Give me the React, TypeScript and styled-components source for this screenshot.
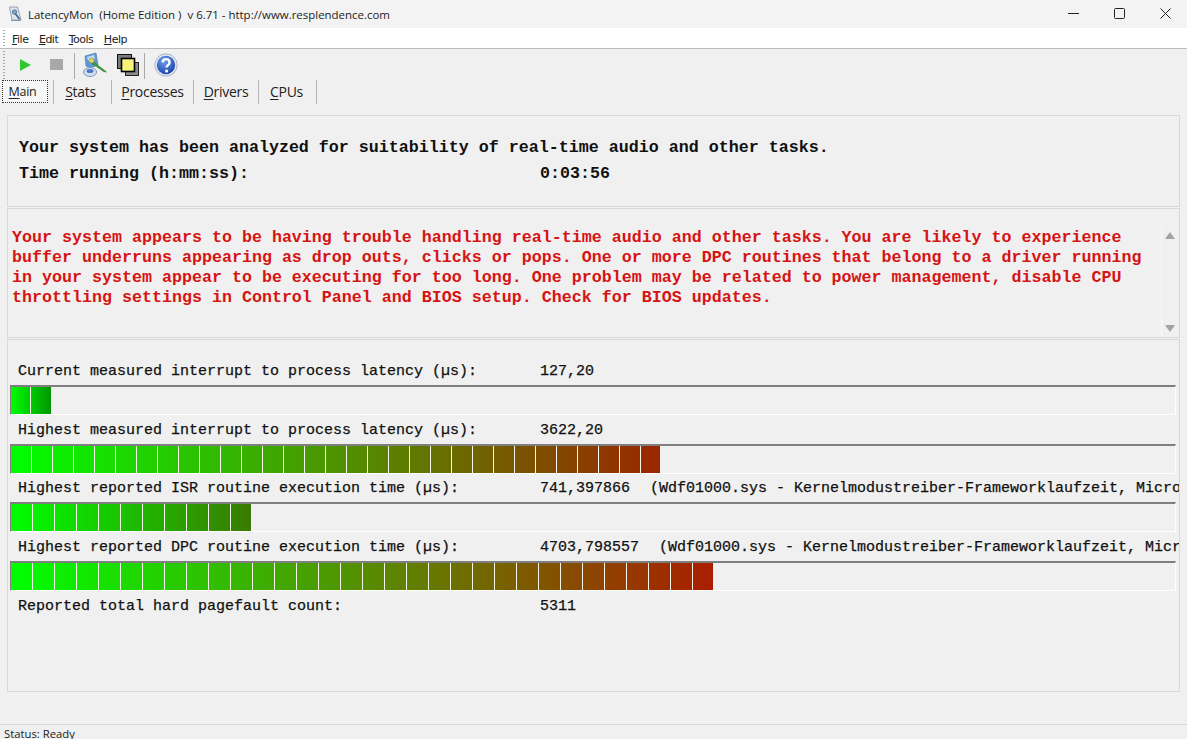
import React from "react";
import styled, { createGlobalStyle } from "styled-components";

const Global = createGlobalStyle`
  html, body { margin: 0; padding: 0; background: #f0f0f0; }
  #root { width: 1187px; height: 739px; overflow: hidden; }
`;

const Win = styled.div`
  width: 1187px; height: 739px; display: flex; flex-direction: column;
  background: #f0f0f0; overflow: hidden; font-family: "Open Sans", sans-serif; color: #111;
`;
const TitleBar = styled.div`
  height: 28px; flex: none; display: flex; align-items: center; background: #f3f3f3;
  padding-left: 8px; font-size: 11.46px; color: #222;
`;
const TitleText = styled.span`
  margin-left: 5px; white-space: pre;
`;
const WinButtons = styled.div`
  margin-left: auto; margin-right: -1px; padding-bottom: 2px; box-sizing: border-box;
  display: flex; align-items: center; height: 100%;
`;
const WinBtn = styled.div`
  width: 46px; height: 100%; display: flex; align-items: center; justify-content: center;
`;
const MenuBar = styled.div`
  height: 18px; padding-top: 2px; flex: none; background: #fff; display: flex; align-items: center;
  border-bottom: 1px solid #bcbcbc; padding-left: 12px; gap: 10.5px;
  font-family: "DejaVu Sans", sans-serif; font-size: 11px; color: #222; position: relative;
`;
const Gripper = styled.div`
  position: absolute; left: 3px; top: 2px; bottom: 1px; width: 2px;
  background: repeating-linear-gradient(to bottom, #a8a8a8 0 1px, transparent 1px 3px);
`;
const MenuItem = styled.span`
  white-space: pre; letter-spacing: -0.5px;
  u { text-underline-offset: 1px; }
`;
const ToolBar = styled.div`
  height: 31px; flex: none; display: flex; align-items: center; position: relative; padding-left: 17px;
`;
const ToolSlot = styled.div<{ $w: number; $pl?: number; $pr?: number }>`
  width: ${(p) => p.$w}px; height: 100%; box-sizing: border-box;
  padding-left: ${(p) => p.$pl ?? 0}px; padding-right: ${(p) => p.$pr ?? 0}px;
  display: flex; align-items: center; justify-content: center; flex: none;
`;
const ToolSep = styled.div`
  width: 1px; height: 26px; background: #a9a9a9; flex: none; margin-top: 2px;
`;
const Tabs = styled.div`
  height: 24px; flex: none; display: flex; align-items: stretch; padding-left: 2px;
  font-size: 14px; color: #222;
`;
const Tab = styled.div<{ $w: number; $pr?: number }>`
  width: ${(p) => p.$w}px; box-sizing: border-box; display: flex; align-items: center; justify-content: center;
  border-right: 1px solid #b4b4b4; padding-bottom: 1px; padding-right: ${(p) => p.$pr ?? 0}px;
  letter-spacing: -0.3px;
  u { text-underline-offset: 2px; text-decoration-thickness: 1px; }
`;
const ActiveTab = styled(Tab)`
  border: 1px dotted #333; background: #f7f7f7; height: 23px; margin-top: 0; font-size: 12.5px;
  padding-bottom: 0; letter-spacing: -0.3px;
`;
const TabGap = styled.div`
  width: 6px; flex: none; border-right: 1px solid #b4b4b4; box-sizing: border-box;
`;
const Body = styled.div`
  flex: none; display: flex; flex-direction: column; padding: 11px 7px 0 7px; gap: 1px;
`;
const Panel = styled.div<{ $h: number }>`
  height: ${(p) => p.$h}px; box-sizing: border-box; border: 1px solid #d9d9d9; position: relative;
  overflow: hidden;
`;
const Mono = styled.div`
  font-family: "Liberation Mono", monospace; white-space: pre;
`;
const HeadPanel = styled(Panel)`
  padding: 22px 0 0 11px; display: flex; flex-direction: column; gap: 7px;
`;
const HeadLine = styled(Mono)`
  font-size: 16.67px; font-weight: bold; line-height: 19px; color: #111;
`;
const HeadRow = styled.div`
  display: flex;
`;
const HeadLabel = styled(HeadLine)`
  width: 521px;
`;
const WarnPanel = styled(Panel)`
  padding: 19px 0 0 4px;
`;
const WarnText = styled(Mono)`
  font-size: 16.67px; font-weight: bold; line-height: 20px; color: #d61414;
`;
const ScrollTrack = styled.div`
  position: absolute; right: 1px; top: 17px; bottom: 1px; width: 17px;
  border-left: 1px solid #f8f8f8; box-sizing: border-box;
  display: flex; flex-direction: column; justify-content: space-between; align-items: center;
  padding: 6px 0 4px;
`;
const Arrow = styled.div<{ $down?: boolean }>`
  width: 0; height: 0; border-left: 5px solid transparent; border-right: 5px solid transparent;
  ${(p) => (p.$down ? "border-top: 7px solid #a3a3a3;" : "border-bottom: 7px solid #a3a3a3;")}
`;
const MetricsPanel = styled(Panel)`
  padding: 23px 0 0 2px; display: flex; flex-direction: column;
`;
const MetricLine = styled(Mono)`
  font-size: 15px; line-height: 18px; height: 18px; padding-left: 8px; color: #111; display: flex;
  -webkit-text-stroke: 0.25px #111;
`;
const MetricLabel = styled.span`
  width: 522px; flex: none;
`;
const Detail = styled.span`
  margin-left: 20px;
`;
const Track = styled.div<{ $after: number }>`
  width: 1166px; height: 30px; box-sizing: border-box; margin: 4px 0 ${(p) => p.$after}px; flex: none;
  border-top: 2px solid #7f7f7f; border-left: 1px solid #7f7f7f; border-bottom: 1px solid #fff;
  border-right: 1px solid #fff; display: flex; overflow: hidden;
`;
const Seg = styled.div<{ $w: number }>`
  width: ${(p) => p.$w}px; height: 100%; flex: none; box-sizing: border-box; border-right: 1px solid #f6f6ea;
  &:last-child { border-right: none; }
`;
const SpacerBottom = styled.div`
  flex: 1;
`;
const StatusGap = styled.div`
  height: 32px; flex: none;
`;
const StatusBar = styled.div`
  border-top: 1px solid #d9d9d9; height: 15px; flex: none; padding: 0 0 0 4px;
  font-size: 11.3px; line-height: 17px; color: #222;
`;

const lerp = (a: number, b: number, t: number) => Math.round(a + (b - a) * t);
type RGB = [number, number];

function Bar({ width, seg, end, after = 7 }: { width: number; seg: number; end: RGB; after?: number }) {
  const count = Math.ceil(width / seg);
  const colorAt = (x: number) => {
    const t = x / width;
    return `rgb(${lerp(0, end[0], t)},${lerp(255, end[1], t)},0)`;
  };
  return (
    <Track $after={after}>
      {Array.from({ length: count }, (_, i) => {
        const start = i * seg;
        const w = Math.min(seg, width - start);
        const bg = `linear-gradient(to right, ${colorAt(start)}, ${colorAt(start + w)})`;
        return <Seg key={i} $w={w} style={{ background: bg }} />;
      })}
    </Track>
  );
}

const AppIcon = () => (
  <svg width="15" height="16" viewBox="0 0 15 16">
    <path d="M1.5 1h8l3.5 13h-9z" fill="#dfe6ee" stroke="#7d8da5" strokeWidth=".8" />
    <circle cx="6.5" cy="6" r="2.2" fill="#7fa8cc" stroke="#3e5f8a" strokeWidth=".7" />
    <path d="M7.5 8l4 5" stroke="#38577f" strokeWidth="1.5" />
    <path d="M3 14h10v1H3z" fill="#8a97aa" />
  </svg>
);
const Play = () => (
  <svg width="14" height="14" viewBox="0 0 14 14">
    <path d="M2 1L13 7 2 13z" fill="#2fc72f" />
  </svg>
);
const Stop = () => (
  <svg width="13" height="11" viewBox="0 0 13 11"><rect width="13" height="11" fill="#a8a8a8" /></svg>
);
const Tool1 = () => (
  <svg width="26" height="26" viewBox="0 0 26 26">
    <path d="M3 4l11-3 2 12-8 3-4-2z" fill="#5a9ad6" stroke="#5d7ea6" strokeWidth=".7" />
    <path d="M5 5l7-2 1 4-7 2z" fill="#bfe3f7" />
    <ellipse cx="8" cy="20" rx="6.5" ry="4.5" fill="#d4dff0" stroke="#7f93bd" />
    <ellipse cx="8" cy="19" rx="3.5" ry="2" fill="#4e77c8" />
    <path d="M9 8l13 10 2.5 2-3-.5L8 10z" fill="#3da63d" stroke="#2a6e2a" strokeWidth=".6" />
    <circle cx="9.5" cy="8.5" r="2.6" fill="#e6d36a" stroke="#8d7f30" strokeWidth=".6" />
  </svg>
);
const Tool2 = () => (
  <svg width="24" height="24" viewBox="0 0 24 24">
    <rect x="1.5" y="1.5" width="14" height="14" fill="#7a7a7a" stroke="#111" />
    <rect x="9.5" y="9.5" width="13" height="13" fill="#8a8a8a" stroke="#222" />
    <rect x="5.5" y="5.5" width="13" height="13" fill="#f6f27a" stroke="#000" strokeWidth="1.6" />
  </svg>
);
const Help = () => (
  <svg width="24" height="24" viewBox="0 0 24 24">
    <defs>
      <radialGradient id="hb" cx="40%" cy="30%" r="75%">
        <stop offset="0" stopColor="#6f9ff0" />
        <stop offset="1" stopColor="#1840a8" />
      </radialGradient>
    </defs>
    <circle cx="12" cy="12" r="11.2" fill="#e3e8f2" stroke="#9aa5bd" strokeWidth=".8" />
    <circle cx="12" cy="12" r="9.2" fill="url(#hb)" />
    <path d="M8.6 9.4c.2-4.4 7-4.4 7 .1 0 2.7-3 2.6-3 5" fill="none" stroke="#fff" strokeWidth="2.4" />
    <circle cx="12.6" cy="18" r="1.6" fill="#fff" />
  </svg>
);

const warning = `Your system appears to be having trouble handling real-time audio and other tasks. You are likely to experience
buffer underruns appearing as drop outs, clicks or pops. One or more DPC routines that belong to a driver running
in your system appear to be executing for too long. One problem may be related to power management, disable CPU
throttling settings in Control Panel and BIOS setup. Check for BIOS updates.`;

export default function App() {
  return (
    <Win>
      <Global />
      <TitleBar>
        <AppIcon />
        <TitleText>LatencyMon  (Home Edition )  v 6.71 - http://www.resplendence.com</TitleText>
        <WinButtons>
          <WinBtn>
            <svg width="11" height="11" viewBox="0 0 11 11"><path d="M0 5.5h11" stroke="#222" /></svg>
          </WinBtn>
          <WinBtn>
            <svg width="11" height="11" viewBox="0 0 11 11"><rect x=".5" y=".5" width="10" height="10" rx="1" fill="none" stroke="#222" /></svg>
          </WinBtn>
          <WinBtn>
            <svg width="11" height="11" viewBox="0 0 11 11"><path d="M.5.5l10 10M10.5.5l-10 10" stroke="#222" /></svg>
          </WinBtn>
        </WinButtons>
      </TitleBar>
      <MenuBar>
        <Gripper />
        <MenuItem><u>F</u>ile</MenuItem>
        <MenuItem><u>E</u>dit</MenuItem>
        <MenuItem><u>T</u>ools</MenuItem>
        <MenuItem><u>H</u>elp</MenuItem>
      </MenuBar>
      <ToolBar>
        <Gripper />
        <ToolSlot $w={16}><Play /></ToolSlot>
        <ToolSlot $w={41} $pl={5}><Stop /></ToolSlot>
        <ToolSep />
        <ToolSlot $w={40}><Tool1 /></ToolSlot>
        <ToolSlot $w={29} $pr={4}><Tool2 /></ToolSlot>
        <ToolSep />
        <ToolSlot $w={41}><Help /></ToolSlot>
      </ToolBar>
      <Tabs>
        <ActiveTab $w={46} $pr={5}><span><u>M</u>ain</span></ActiveTab>
        <TabGap />
        <Tab $w={58} $pr={4}><span><u>S</u>tats</span></Tab>
        <Tab $w={82}><span><u>P</u>rocesses</span></Tab>
        <Tab $w={65}><span><u>D</u>rivers</span></Tab>
        <Tab $w={58} $pr={2}><span><u>C</u>PUs</span></Tab>
      </Tabs>
      <Body>
        <HeadPanel $h={92}>
          <HeadLine>Your system has been analyzed for suitability of real-time audio and other tasks.</HeadLine>
          <HeadRow>
            <HeadLabel>Time running (h:mm:ss):</HeadLabel>
            <HeadLine>0:03:56</HeadLine>
          </HeadRow>
        </HeadPanel>
        <WarnPanel $h={130}>
          <WarnText>{warning}</WarnText>
          <ScrollTrack>
            <Arrow />
            <Arrow $down />
          </ScrollTrack>
        </WarnPanel>
        <MetricsPanel $h={353}>
          <MetricLine><MetricLabel>Current measured interrupt to process latency (µs):</MetricLabel>127,20</MetricLine>
          <Bar width={40} seg={20} end={[0, 150]} />
          <MetricLine><MetricLabel>Highest measured interrupt to process latency (µs):</MetricLabel>3622,20</MetricLine>
          <Bar width={649} seg={21} end={[155, 38]} after={6} />
          <MetricLine><MetricLabel>Highest reported ISR routine execution time (µs):</MetricLabel>741,397866<Detail>(Wdf01000.sys - Kernelmodustreiber-Frameworklaufzeit, Microsoft Corporation)</Detail></MetricLine>
          <Bar width={240} seg={22} end={[58, 122]} />
          <MetricLine><MetricLabel>Highest reported DPC routine execution time (µs):</MetricLabel>4703,798557<Detail>(Wdf01000.sys - Kernelmodustreiber-Frameworklaufzeit, Microsoft Corporation)</Detail></MetricLine>
          <Bar width={702} seg={22} end={[170, 30]} />
          <MetricLine><MetricLabel>Reported total hard pagefault count:</MetricLabel>5311</MetricLine>
          <SpacerBottom />
        </MetricsPanel>
      </Body>
      <StatusGap />
      <StatusBar>Status: Ready</StatusBar>
    </Win>
  );
}
